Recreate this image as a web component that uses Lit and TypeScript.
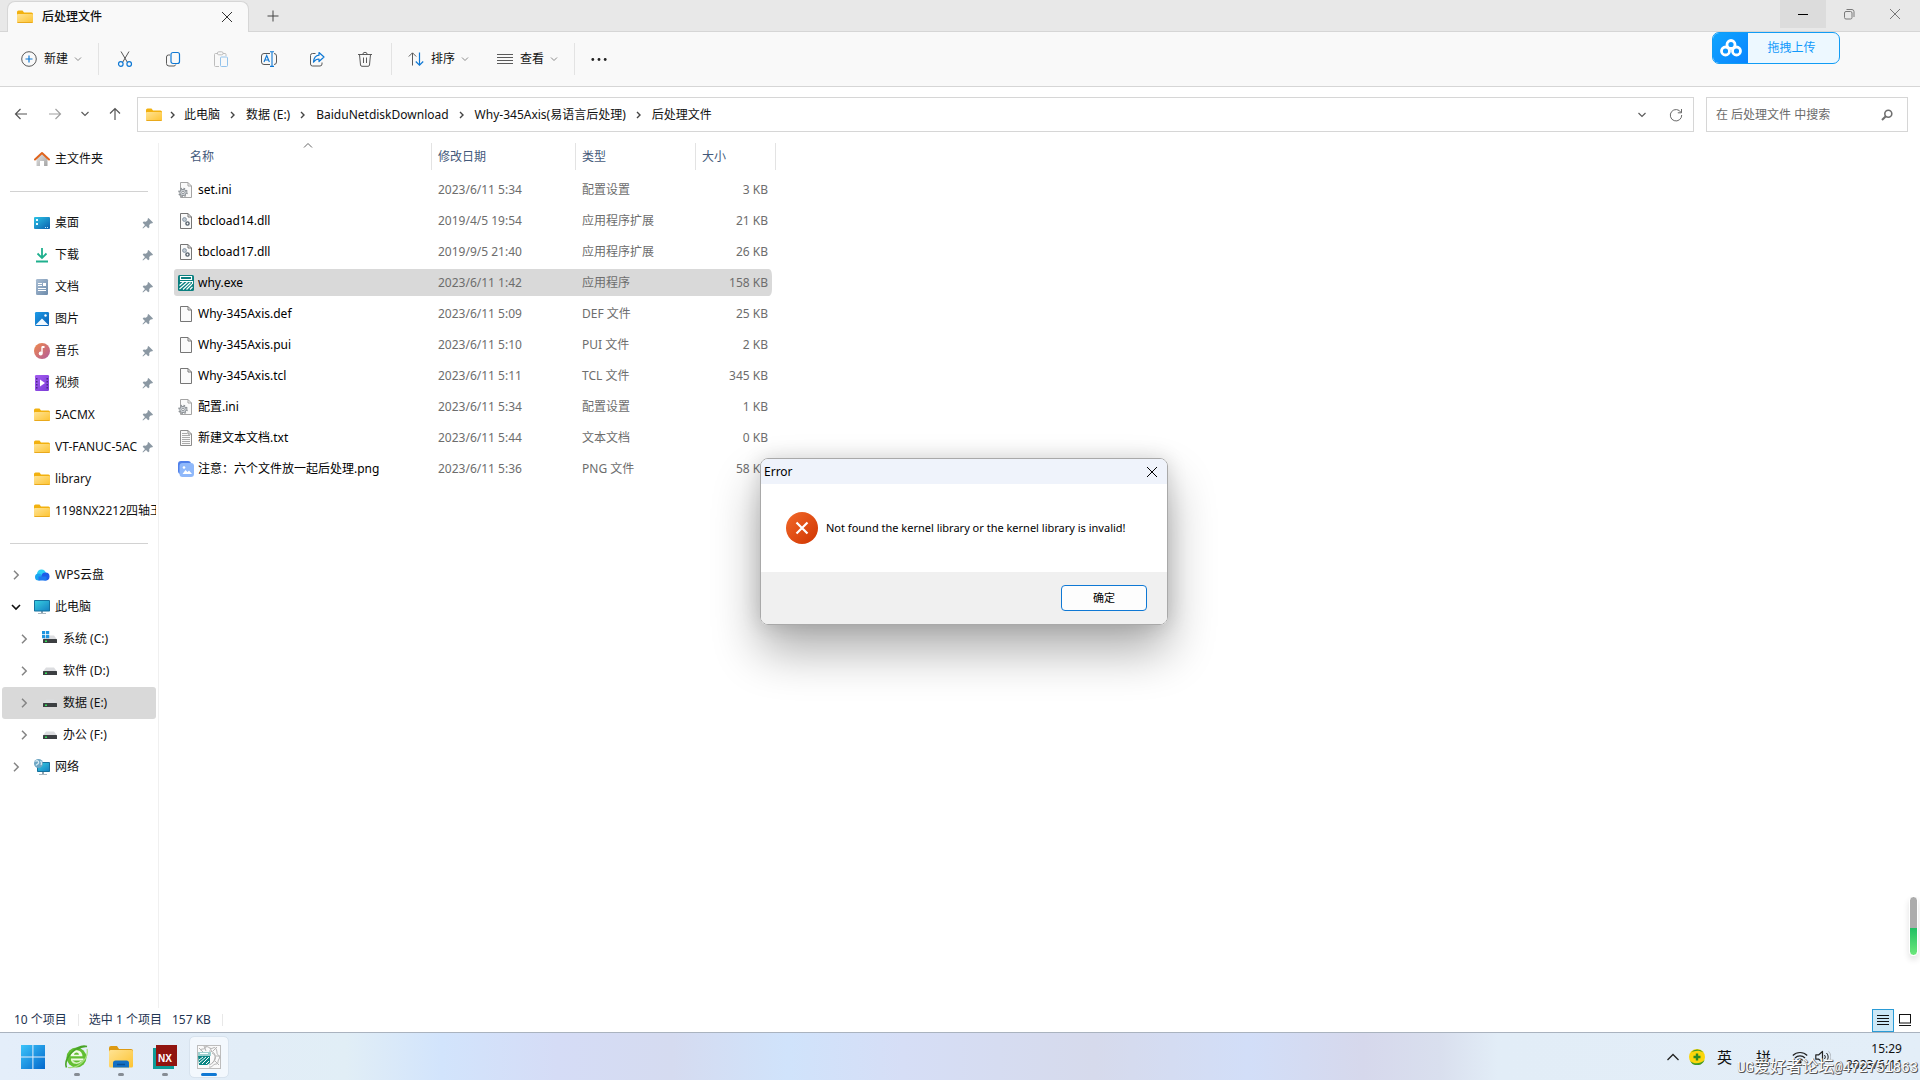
import { LitElement, html, css, svg, nothing, TemplateResult } from "lit";
import { customElement, state } from "lit/decorators.js";
import { classMap } from "lit/directives/class-map.js";

type Icon = { w: number; h: number; art: TemplateResult };

const icon = (w: number, h: number, art: TemplateResult): Icon => ({ w, h, art });

const sheet = (stroke: string) => svg`
  <path d="M2.500 .5h7.500l3.500 3.500v11.500h-11z" fill="#fafafa" stroke=${stroke}/>
  <path d="M10 .5v3.500h3.500" fill="none" stroke=${stroke}/>`;

const drive = svg`
  <path d="M4 4.500h8l3 4h-14z" fill="#dcdde0"/>
  <rect x="1" y="8" width="14" height="4" rx=".6" fill="#3c3f42"/>
  <rect x="3" y="9.500" width="2" height="1.500" fill="#35e05a"/>`;

const ICONS: Record<string, Icon> = {
  folder: icon(16, 16, svg`
    <path d="M0 3a1.500 1.500 0 0 1 1.500-1.500h4l1.500 2h7.500A1.500 1.500 0 0 1 16 5v3H0z" fill="#f2b10f"/>
    <rect x="0" y="5" width="16" height="9" rx="1" fill="url(#gFolder)"/>
    <path d="M.5 13.500h15" stroke="#e9a91c"/>`),
  home: icon(16, 16, svg`
    <path d="M2.500 7.500 8 2.500l5.500 5V15h-3.500v-5H6v5H2.500z" fill="url(#gHome)"/>
    <path d="M1 8.500 8 2l7 6.500" fill="none" stroke="#e0651e" stroke-width="2" stroke-linecap="round" stroke-linejoin="round"/>`),
  desktop: icon(16, 16, svg`
    <rect x="0" y="2" width="16" height="12" rx="1" fill="url(#gDesk)"/>
    <path d="M2 4h2v2H2zM2 8h2v2H2z" fill="#e9fbff"/>
    <path d="M11 12.500h1M13 12.500h1" stroke="#bfe9ff"/>`),
  download: icon(16, 16, svg`
    <path d="M8 1v9.500M3.500 6.500 8 11l4.500-4.500M2 14.500h12" fill="none" stroke="#1fb08e" stroke-width="1.800"/>`),
  document: icon(16, 16, svg`
    <rect x="2" y="0" width="12" height="16" rx="1.200" fill="url(#gDoc)"/>
    <path d="M4 4.500h4M4 6.500h4M4 9.500h8M4 11.500h8" stroke="#fff"/><rect x="9" y="4" width="3" height="3" fill="#fff"/>`),
  picture: icon(16, 16, svg`
    <rect x="1" y="1" width="14" height="14" rx="1.200" fill="url(#gPic)"/>
    <path d="M1.500 14 8 7.500l6.500 6.500z" fill="#f2f9ff"/><circle cx="11.500" cy="4.500" r="1.200" fill="#fff"/>`),
  music: icon(16, 16, svg`
    <circle cx="8" cy="8" r="8" fill="url(#gMusic)"/>
    <path d="M8 3.500v6.500" stroke="#fff" stroke-width="1.400"/><path d="M8 3h2.500v2H8z" fill="#fff"/><circle cx="6.700" cy="10.500" r="2" fill="#fff"/>`),
  video: icon(16, 16, svg`
    <rect x="1" y="0" width="14" height="16" rx="1.200" fill="url(#gVideo)"/>
    <path d="M6 4.500v7l5-3.500z" fill="#fff"/>
    <path d="M2 3h1.500v1.500H2zM2 6h1.500v1.500H2zM2 9h1.500v1.500H2zM2 12h1.500v1.500H2zM12.500 3H14v1.500h-1.500zM12.500 6H14v1.500h-1.500zM12.500 9H14v1.500h-1.500zM12.500 12H14v1.500h-1.500z" fill="#4b2a86"/>`),
  cloud: icon(16, 16, svg`
    <circle cx="7.500" cy="7" r="4.500" fill="#2fd0f5"/><circle cx="4.500" cy="10" r="3.500" fill="#1aa5f0"/>
    <circle cx="11.500" cy="9.500" r="4" fill="#1d5ce8"/><path d="M4.500 9.500h8v4h-8z" fill="#1d78ef"/>`),
  pc: icon(16, 16, svg`
    <path d="M7 12h2v2H7z" fill="#8fa3b0"/><path d="M4 14.500h8" stroke="#a9b7c0"/>
    <rect x="0" y="1" width="16" height="11.500" rx=".8" fill="#16719d"/><rect x="1" y="2" width="14" height="9.500" fill="url(#gPc)"/>`),
  drive: icon(16, 16, drive),
  system: icon(16, 16, svg`${drive}<path d="M0 0h3.200v3.200H0zM4 0h3.200v3.200H4zM0 4h3.200v3.200H0zM4 4h3.200v3.200H4z" fill="#1f95e0"/>`),
  network: icon(16, 16, svg`
    <path d="M8 13h2v2H8z" fill="#8fa3b0"/><path d="M5 15.500h8" stroke="#a9b7c0"/>
    <rect x="3" y="3" width="13" height="10" rx=".8" fill="#16719d"/><rect x="4" y="4" width="11" height="8" fill="url(#gPc)"/>
    <circle cx="4.500" cy="4.500" r="4.500" fill="#6ea6c4"/><path d="M1.500 2.500c2-2 3.500 0 3 1.500s-2 1-2.500 2.500M6.500 2c1 1 1.500 2 .5 4" fill="none" stroke="#d7ebf3" stroke-width="1.200"/>`),
  ini: icon(16, 16, svg`${sheet("#a4a4a4")}
    <circle cx="5" cy="10.500" r="4" fill="none" stroke="#8d9297" stroke-width="1.600" stroke-dasharray="1.600 1.540"/>
    <circle cx="5" cy="10.500" r="3.200" fill="#d6dade" stroke="#8d9297"/><circle cx="5" cy="10.500" r="1.300" fill="#fafafa" stroke="#8d9297"/>`),
  dll: icon(16, 16, svg`${sheet("#767676")}
    <circle cx="6.500" cy="6.500" r="1.900" fill="#c4cdd6" stroke="#8796a5"/><circle cx="9.500" cy="10.500" r="1.600" fill="#fff" stroke="#54606b" stroke-width="1.400"/>`),
  file: icon(16, 16, sheet("#767676")),
  txt: icon(16, 16, svg`${sheet("#8c8c8c")}<path d="M4 5.500h8M4 7.500h8M4 9.500h8M4 11.500h8M4 13.500h8M4 3.500h5" stroke="#ababab"/>`),
  exe: icon(16, 16, svg`
    <rect width="16" height="16" rx="1.500" fill="#0a7f7f"/>
    <path d="M2.500 1.500h11v3h-11zM2 6.500h12.500v2.500M1.500 10.500l4.500-4M1.500 14l8-7M5 14.500l7.500-7M8.500 14.500l5.500-5.500M12 14.500l2.500-2.500" fill="none" stroke="#fff" stroke-width="1.100"/>`),
  png: icon(16, 16, svg`
    <rect x="0" y="0" width="13" height="13" rx="3" fill="#4f80ea"/><rect x="1.500" y="2" width="14.500" height="14" rx="3" fill="#8fb8fa"/>
    <path d="M4.500 13l3-4 2 2 1.500-1.500L14 13z" fill="#fff"/><circle cx="6" cy="6.500" r="1.300" fill="#fff"/>`),
  pin: icon(12, 12, svg`
    <path d="M6.500 1 11 5.500l-1 1-1-.3-1.800 1.900.2 2.200-1.200 1L4 9 1 11.500.5 11 3 8 .7 5.800l1-1.200 2.200.2L5.800 3l-.3-1z" fill="#8b98a3"/>`),
  right: icon(10, 10, svg`<path d="M3 .8 7.200 5 3 9.200" fill="none" stroke="#858585" stroke-width="1.500"/>`),
  open: icon(10, 10, svg`<path d="M1 3l4 4 4-4" fill="none" stroke="#111" stroke-width="1.600"/>`),
  crumb: icon(6, 8, svg`<path d="M1 1l3 3-3 3" fill="none" stroke="#444" stroke-width="1.400"/>`),
  down: icon(8, 8, svg`<path d="M1 2.500l3 3 3-3" fill="none" stroke="#8a8a8a"/>`),
  downWide: icon(10, 10, svg`<path d="M1.500 3 5 6.500 8.500 3" fill="none" stroke="#5c5c5c" stroke-width="1.200"/>`),
  up: icon(10, 6, svg`<path d="M1 4.500l4-4 4 4" fill="none" stroke="#666"/>`),
  create: icon(16, 16, svg`
    <circle cx="8" cy="8" r="7.300" fill="none" stroke="#5a5a5a"/><path d="M8 4.500v7M4.500 8h7" stroke="#0f78d4" stroke-width="1.200"/>`),
  cut: icon(16, 16, svg`
    <path d="M4 .5l6.500 11M12 .5 5.500 11.500" fill="none" stroke="#555"/>
    <circle cx="3.800" cy="13" r="2.300" fill="none" stroke="#0f78d4" stroke-width="1.200"/><circle cx="12.200" cy="13" r="2.300" fill="none" stroke="#0f78d4" stroke-width="1.200"/>`),
  copy: icon(16, 16, svg`
    <rect x="6" y="1.500" width="8.500" height="11" rx="2" fill="none" stroke="#0f78d4" stroke-width="1.200"/>
    <path d="M5 4H3.500a2 2 0 0 0-2 2v6.500a2.500 2.500 0 0 0 2.500 2.500h5a2 2 0 0 0 1.800-1.500" fill="none" stroke="#5a5a5a"/>`),
  paste: icon(16, 16, svg`
    <path d="M6 15.500H2.500a1 1 0 0 1-1-1v-11a1 1 0 0 1 1-1H5M10 2.500h2a1 1 0 0 1 1 1V5" fill="none" stroke="#bdbdbd"/>
    <rect x="4.500" y=".8" width="5.500" height="3" rx="1.200" fill="none" stroke="#bdbdbd"/><rect x="7.500" y="6" width="7" height="9.500" rx="1" fill="#f9f9f9" stroke="#93c3ec"/>`),
  rename: icon(16, 16, svg`
    <path d="M9 2.500H3A2.500 2.500 0 0 0 .5 5v6A2.500 2.500 0 0 0 3 13.500h6M13 2.500A2.500 2.500 0 0 1 15.500 5v6a2.500 2.500 0 0 1-2.500 2.500" fill="none" stroke="#5a5a5a"/>
    <path d="M11 .8v14.500M9 .7h4M9 15.400h4M3 11l2.700-6.500L8.400 11M4 9h3.500" fill="none" stroke="#0f78d4" stroke-width="1.100"/>`),
  share: icon(16, 16, svg`
    <path d="M6.500 2.500H3.500a2 2 0 0 0-2 2v8.500a2 2 0 0 0 2 2H11a2 2 0 0 0 2-2v-1.500" fill="none" stroke="#5a5a5a"/>
    <path d="M10 1.500 15 6l-5 4.500V8C7.500 8 6 9 4.500 11.200 4.800 7 7 4.500 10 4.200z" fill="none" stroke="#0f78d4" stroke-width="1.200" stroke-linejoin="round"/>`),
  trash: icon(16, 16, svg`
    <path d="M1 3.500h14M5.800 3.500a2.200 2.200 0 0 1 4.400 0M2.500 3.500l1 10.500a1.500 1.500 0 0 0 1.500 1.300h6a1.500 1.500 0 0 0 1.500-1.300l1-10.500M6.500 6.500v5.500M9.500 6.500v5.500" fill="none" stroke="#5a5a5a"/>`),
  sort: icon(16, 16, svg`
    <path d="M4.500 14.500V2M.8 5.500 4.500 1.800l3.700 3.700" fill="none" stroke="#5a5a5a"/>
    <path d="M11.500 1.500V14M7.800 10.500l3.700 3.700 3.700-3.700" fill="none" stroke="#0f78d4" stroke-width="1.200"/>`),
  view: icon(16, 16, svg`<path d="M0 3.500h16M0 6.500h16M0 9.500h16M0 12.500h16" stroke="#5a5a5a"/>`),
  more: icon(16, 16, svg`<circle cx="1.800" cy="8.500" r="1.400" fill="#222"/><circle cx="8" cy="8.500" r="1.400" fill="#222"/><circle cx="14.200" cy="8.500" r="1.400" fill="#222"/>`),
  back: icon(14, 14, svg`<path d="M13 7H1.500M6.500 2l-5 5 5 5" fill="none" stroke="#555" stroke-width="1.200"/>`),
  forward: icon(14, 14, svg`<path d="M1 7h11.500M7.500 2l5 5-5 5" fill="none" stroke="#a0a0a0" stroke-width="1.200"/>`),
  upward: icon(14, 14, svg`<path d="M7 13V1.500M2 6.500l5-5 5 5" fill="none" stroke="#555" stroke-width="1.200"/>`),
  refresh: icon(14, 14, svg`<path d="M12 4.500A5.700 5.700 0 1 0 12.700 7M12.500 1v3.800H8.800" fill="none" stroke="#6a6a6a"/>`),
  search: icon(12, 12, svg`<circle cx="7.300" cy="4.700" r="3.500" fill="none" stroke="#6e6e6e" stroke-width="1.600"/><path d="M4.800 7.200 1 11" stroke="#6e6e6e" stroke-width="2"/>`),
  close: icon(12, 12, svg`<path d="M1 1l10 10M11 1 1 11" stroke="currentColor"/>`),
  plus: icon(12, 12, svg`<path d="M6 .5v11M.5 6h11" stroke="#444"/>`),
  minimise: icon(12, 12, svg`<path d="M1 6.500h10" stroke="#000"/>`),
  restore: icon(12, 12, svg`<rect x="1.500" y="3.500" width="7.500" height="7.500" rx="1.500" fill="none" stroke="#7a7a7a"/><path d="M3.500 1.500H9A2.200 2.200 0 0 1 11 3.700V9" fill="none" stroke="#7a7a7a"/>`),
  netdisk: icon(22, 18, svg`
    <g fill="none" stroke="#fff" stroke-width="2.800"><circle cx="11" cy="5.500" r="4"/><circle cx="5.500" cy="12" r="4"/><circle cx="16.500" cy="12" r="4"/></g>`),
  error: icon(32, 32, svg`<circle cx="16" cy="16" r="16" fill="url(#gError)"/><path d="M10.500 10.500l11 11M21.500 10.500l-11 11" stroke="#fff" stroke-width="2.200"/>`),
  details: icon(12, 12, svg`<path d="M0 1.500h12M0 4.500h12M0 7.500h12M0 10.500h12" stroke="#111"/>`),
  tiles: icon(12, 12, svg`<rect x=".5" y=".5" width="11" height="8.500" fill="#fff" stroke="#111"/><path d="M0 11.500h12" stroke="#111"/>`),
  start: icon(24, 24, svg`<path d="M0 0h11.400v11.400H0zM12.400 0H24v11.400H12.400zM0 12.400h11.400V24H0zM12.400 12.400H24V24H12.400z" fill="url(#gStart)"/>`),
  browser: icon(24, 24, svg`
    <circle cx="11.500" cy="12.500" r="10" fill="#62bf32"/>
    <path d="M5.500 11.300c.5-8 11.500-8 12 0z" fill="#f0fae6"/><path d="M9 9.800c.5-3 4.500-3 5 0z" fill="#62bf32"/>
    <path d="M6 14.500h12.500" stroke="#f0fae6" stroke-width="2"/>
    <path d="M6.500 14.500c1 4 6 5 10 1.500" fill="none" stroke="#d9f3c4" stroke-width="1.500"/>
    <path d="M1.500 22.500C-2 13 12-1 22 1.500c-4-.5-8 1.500-10 3" fill="none" stroke="#49a428" stroke-width="1.600"/>
    <path d="M22 4c2 9-8 20-19 18.500" fill="none" stroke="#a7e07c" stroke-width="1.200"/>`),
  explorer: icon(24, 24, svg`
    <path d="M0 3a2 2 0 0 1 2-2h6l2 3h12a2 2 0 0 1 2 2v3H0z" fill="#dd9a13"/><rect x="0" y="5" width="24" height="17.500" rx="1.500" fill="url(#gFolder)"/>
    <path d="M4 22.500V18a2.500 2.500 0 0 1 2.500-2.500h11A2.500 2.500 0 0 1 20 18v4.500z" fill="#1470c4"/><path d="M8 19.500h8" stroke="#0b4f94" stroke-width="1.500"/>`),
  nx: icon(24, 24, svg`
    <rect x="0" y="3" width="21" height="21" fill="#0d9c98"/><rect x="3" y="0" width="21" height="21" fill="#90140f"/>
    <text x="5" y="17" font-family="Liberation Sans, Arial, sans-serif" font-size="10" font-weight="700" fill="#fff">NX</text>`),
  axis: icon(24, 24, svg`
    <rect x=".5" y=".5" width="23" height="23" fill="#fafafa" stroke="#bdbdbd"/>
    <path d="M8 2c3-2 5 3 8 1s4 3 4 5 4 3 2 6 0 5-3 5-4 4-7 3M12 6c4 0 7 3 6 7s-3 6-6 7M2 3l4 4M7 1l2 5M20 2l-4 4M22 20l-4-4M3 5c3-2 5 0 6-3M15 8c5 2 4 8 0 10M13 3l2 4M19 11h4" fill="none" stroke="#b4b4b4"/>
    <path d="M1 7h13v4H1z" fill="#9fd0cf"/><path d="M1 11h12v7l-3 2H2z" fill="#0a8583"/>
    <path d="M3 8.500h8M2 15l4-3M2 18l7-6M5 19l7-7M9 19l3-3" fill="none" stroke="#fff"/>`),
  trayUp: icon(14, 14, svg`<path d="M1.500 10 7 4.500l5.500 5.500" fill="none" stroke="#222" stroke-width="1.300"/>`),
  guard: icon(16, 16, svg`
    <circle cx="8" cy="8" r="8" fill="#fbd60b"/><path d="M2 3.500A8 8 0 0 1 14.500 3.500C10 .8 6 1.500 2 3.500zM1 12c4 3 10 3.500 14.500-1A8 8 0 0 1 1 12z" fill="#3f9a2a"/>
    <path d="M8 4.500v7M4.500 8h7" stroke="#2b8a23" stroke-width="2.400"/>`),
  wifi: icon(16, 14, svg`
    <path d="M.8 5.500a10.200 10.200 0 0 1 14.400 0M3 8a7 7 0 0 1 10 0M5.300 10.300a3.800 3.800 0 0 1 5.400 0" fill="none" stroke="#222" stroke-width="1.200"/><circle cx="8" cy="12" r="1.600" fill="#111"/>`),
  volume: icon(16, 14, svg`
    <path d="M.8 4.800h3L7.500 1.500v11L3.800 9.200h-3z" fill="none" stroke="#222" stroke-width="1.200" stroke-linejoin="round"/>
    <path d="M9.500 5a3 3 0 0 1 0 4M11.500 3a5.600 5.600 0 0 1 0 8" fill="none" stroke="#222"/><path d="M13.500 1.200a8.200 8.200 0 0 1 0 11.600" fill="none" stroke="#b5bcc4"/>`),
};

const draw = (name: string) => {
  const { w, h, art } = ICONS[name];
  return html`<svg class="icon" width=${w} height=${h} viewBox="0 0 ${w} ${h}" aria-hidden="true">${art}</svg>`;
};

const FAVOURITES: [string, string, boolean][] = [
  ["desktop", "桌面", true],
  ["download", "下载", true],
  ["document", "文档", true],
  ["picture", "图片", true],
  ["music", "音乐", true],
  ["video", "视频", true],
  ["folder", "5ACMX", true],
  ["folder", "VT-FANUC-5AC", true],
  ["folder", "library", false],
  ["folder", "1198NX2212四轴王", false],
];

const TREE: { art: string; label: string; level: number; open?: boolean; current?: boolean }[] = [
  { art: "cloud", label: "WPS云盘", level: 1 },
  { art: "pc", label: "此电脑", level: 1, open: true },
  { art: "system", label: "系统 (C:)", level: 2 },
  { art: "drive", label: "软件 (D:)", level: 2 },
  { art: "drive", label: "数据 (E:)", level: 2, current: true },
  { art: "drive", label: "办公 (F:)", level: 2 },
  { art: "network", label: "网络", level: 1 },
];

const FILES: [string, string, string, string, string][] = [
  ["ini", "set.ini", "2023/6/11 5:34", "配置设置", "3 KB"],
  ["dll", "tbcload14.dll", "2019/4/5 19:54", "应用程序扩展", "21 KB"],
  ["dll", "tbcload17.dll", "2019/9/5 21:40", "应用程序扩展", "26 KB"],
  ["exe", "why.exe", "2023/6/11 1:42", "应用程序", "158 KB"],
  ["file", "Why-345Axis.def", "2023/6/11 5:09", "DEF 文件", "25 KB"],
  ["file", "Why-345Axis.pui", "2023/6/11 5:10", "PUI 文件", "2 KB"],
  ["file", "Why-345Axis.tcl", "2023/6/11 5:11", "TCL 文件", "345 KB"],
  ["ini", "配置.ini", "2023/6/11 5:34", "配置设置", "1 KB"],
  ["txt", "新建文本文档.txt", "2023/6/11 5:44", "文本文档", "0 KB"],
  ["png", "注意：六个文件放一起后处理.png", "2023/6/11 5:36", "PNG 文件", "58 KB"],
];

const CRUMBS = ["此电脑", "数据 (E:)", "BaiduNetdiskDownload", "Why-345Axis(易语言后处理)", "后处理文件"];

const TOOLS: [string, string][] = [
  ["cut", "剪切"],
  ["copy", "复制"],
  ["paste", "粘贴"],
  ["rename", "重命名"],
  ["share", "共享"],
  ["trash", "删除"],
];

const APPS: [string, string, string][] = [
  ["start", "开始", ""],
  ["browser", "浏览器", "running"],
  ["explorer", "文件资源管理器", "running"],
  ["nx", "NX", "running"],
  ["axis", "why.exe", "active"],
];

@customElement("app-root")
export class AppRoot extends LitElement {
  @state() private selected = "why.exe";
  @state() private dialogOpen = true;

  static styles = css`
    :host {
      display: flex;
      flex-direction: column;
      position: relative;
      min-height: 100vh;
      overflow: hidden;
      background: #fff;
      color: #111;
      font: 12px/16px "Noto Sans", "Noto Sans CJK SC", sans-serif;
      cursor: default;
    }
    * { box-sizing: border-box; }
    button, input { font: inherit; color: inherit; border: 0; padding: 0; margin: 0; background: none; }
    a { color: inherit; text-decoration: none; }
    .icon { display: block; flex: none; }
    .defs { position: absolute; width: 0; height: 0; }
    .center { display: flex; align-items: center; justify-content: center; }

    .titlebar { display: flex; height: 32px; background: #e8e8e8; border-bottom: 1px solid #d6d6d6; }
    .tab {
      display: flex; align-items: center; width: 242px; margin: 1px 0 -1px 7px; padding: 0 9px;
      background: #f9f9f9; border: 1px solid #d6d6d6; border-bottom: 0; border-radius: 8px 8px 0 0;
    }
    .tab-name { flex: 1; margin-left: 9px; font-weight: 500; }
    .tab-close { width: 24px; height: 24px; color: #333; }
    .tab-add { width: 48px; height: 31px; }
    .window-buttons { display: flex; height: 28px; margin: 0 2px 0 auto; color: #777; }
    .window-buttons button { width: 46px; }
    .window-buttons .hover { background: #dcdcdc; }

    .toolbar { display: flex; align-items: center; height: 55px; padding-left: 7px; background: #f9f9f9; border-bottom: 1px solid #d6d6d6; }
    .tool { width: 48px; height: 32px; }
    .tool.more { width: 44px; }
    .menu { display: flex; align-items: center; height: 32px; padding: 0 14px; }
    .menu-name { margin: 0 6px 0 7px; }
    .rule { width: 1px; height: 32px; margin: 0 2px; background: #e3e3e3; }

    .navbar { display: flex; height: 56px; padding: 10px 12px 11px 4px; }
    .nav-button { width: 34px; height: 34px; }
    .nav-button.small { width: 26px; }
    .nav-gap { width: 4px; }
    .address { flex: 1; display: flex; align-items: center; margin-left: 1px; border: 1px solid #d6d6d6; padding-left: 8px; }
    .crumbs { display: flex; align-items: center; flex: 1; }
    .crumb-arrow { width: 26px; }
    .crumb-arrow:first-child { width: 22px; }
    .search { display: flex; align-items: center; width: 202px; margin-left: 12px; padding: 0 14px 0 9px; border: 1px solid #d6d6d6; }
    .search input { flex: 1; min-width: 0; outline: 0; }
    .search input::placeholder { color: #6b6b6b; opacity: 1; }

    .body { display: flex; flex: 1; }
    .sidebar { width: 159px; padding: 0 2px; border-right: 1px solid #f0f0f0; }
    .side-row { display: flex; align-items: center; height: 32px; padding: 0 2px 0 32px; border-radius: 3px; overflow: hidden; }
    .side-row.bare { padding-right: 0; }
    .side-row.tree { padding-left: 4px; }
    .side-row.deep { padding-left: 12px; }
    .side-row.current { background: #d9d9d9; }
    .twisty { width: 20px; height: 20px; margin-right: 8px; }
    .side-name { flex: 1; margin-left: 5px; white-space: nowrap; overflow: hidden; }
    .pin { margin-left: 2px; }
    .side-rule { height: 1px; margin: 16px 8px 15px; background: #d2d2d2; }

    .listing { flex: 1; padding-left: 15px; }
    .files { table-layout: fixed; border-collapse: separate; border-spacing: 0 4px; width: 602px; margin-top: -4px; }
    .files th {
      position: relative; height: 29px; padding: 0 6px 2px; text-align: left; font-weight: 400; color: #44597a;
      background: linear-gradient(#e3e3e3, #e3e3e3) right top / 1px 27px no-repeat;
    }
    .files th:first-child { padding-left: 16px; }
    .sort-mark { position: absolute; top: 0; left: 50%; }
    .files td { height: 27px; padding: 0 6px; color: #6d6d6d; white-space: nowrap; }
    .files td:first-child { padding-left: 4px; border-radius: 3px 0 0 3px; }
    .files td:last-child { padding-right: 4px; text-align: right; border-right: 4px solid transparent; background-clip: padding-box; border-radius: 0 7px 7px 0; }
    .file { display: flex; align-items: center; gap: 4px; color: #000; }
    .selected td { background-color: #d9d9d9; }
    .col-name { width: 258px; }
    .col-date { width: 144px; }
    .col-type { width: 120px; }

    .status { display: flex; align-items: center; height: 24px; padding: 0 4px 0 14px; color: #1f3552; }
    .status-rule { width: 1px; height: 12px; margin: 0 10px 0 11px; background: #e8e8e8; }
    .status-size { margin-left: 10px; }
    .view-button { width: 22px; height: 23px; }
    .view-button.on { background: #cde8f6; border: 1px solid #2a9bd6; }
    .view-buttons { display: flex; margin-left: auto; }

    .taskbar {
      display: flex; align-items: center; height: 48px; padding: 0 18px 0 11px; border-top: 1px solid #aab3bf;
      background: linear-gradient(90deg, #e4eefa 0, #e2edf7 13%, #e1eef6 18%, #d2e4fc 23%, #d5dcf6 29%, #d5dbf0 35%, #d0e3fb 41%, #d6def6 47%, #d6daec 57%, #d2def8 65%, #d6d8ec 71%, #d9dfee 75%, #e2edf7 78%, #e3eef8 100%);
    }
    .app { display: flex; flex-direction: column; align-items: center; justify-content: flex-end; width: 38px; height: 40px; margin: 0 3px; padding-bottom: 1px; border-radius: 4px; gap: 3px; }
    .app.active { background: #f3f8fd; outline: 1px solid #d8e3ee; }
    .app::after { content: ""; width: 6px; height: 3px; margin-top: 1px; border-radius: 2px; }
    .app.running::after { background: #868c94; }
    .app.active::after { width: 16px; background: #0f78d4; }
    .tray { display: flex; align-items: center; margin-left: auto; }
    .tray-up { margin-right: 9px; }
    .ime { margin-left: 12px; font-size: 15px; line-height: 20px; }
    .ime + .ime { margin-left: 24px; }
    .tray-icons { display: flex; gap: 7px; margin: 0 15px 0 21px; }
    .clock { width: 56px; text-align: right; white-space: nowrap; }

    .upload { position: absolute; top: 32px; right: 80px; display: flex; width: 128px; height: 32px; border: 1px solid #119cf5; border-radius: 7px; background: #edf8ff; color: #1099fb; overflow: hidden; }
    .upload-logo { width: 35px; height: 100%; background: linear-gradient(135deg, #0fa5ff, #0a84ff); }
    .upload-name { flex: 1; height: 100%; padding-right: 4px; }

    .meter { position: absolute; right: 2px; top: 896px; width: 9px; height: 60px; border: 1px solid #fff; border-radius: 5px; background: linear-gradient(#acacac 0 31px, #1fbf62 31px, #6de87c 100%); box-shadow: 0 4px 6px rgba(0, 0, 0, .12); }

    .dialog { position: absolute; left: 760px; top: 458px; width: 408px; border: 1px solid #a9a9a9; border-radius: 8px; background: #fff; color: #000; overflow: hidden; }
    .dialog-shadow { position: absolute; left: 760px; top: 458px; width: 408px; height: 167px; border-radius: 8px; box-shadow: 0 26px 48px rgba(0, 0, 0, .32), 0 0 20px rgba(0, 0, 0, .14); }
    .dialog-head { display: flex; align-items: center; height: 25px; padding: 0 5px 0 3px; background: #eff3fb; }
    .dialog-close { width: 20px; height: 20px; margin-left: auto; }
    .dialog-text { display: flex; align-items: center; gap: 8px; height: 88px; padding-left: 25px; margin: 0; font-size: 11px; }
    .dialog-foot { display: flex; justify-content: flex-end; padding: 13px 20px; background: #f0f0f0; }
    .dialog-ok { width: 86px; height: 26px; border: 1px solid #0f78d4; border-radius: 4px; background: #fdfdfd; font-size: 11px; }

    .watermark { position: absolute; right: 2px; bottom: 3px; font: 14px/18px "Liberation Mono", monospace; color: #fff; text-shadow: 1px 1px 0 #555, 1px 0 0 #888, 0 1px 0 #888; white-space: nowrap; pointer-events: none; }
    .watermark-cjk { font: 16px/18px "Noto Sans CJK SC", sans-serif; }
  `;

  private gradient(id: string, from: string, to: string) {
    return svg`<linearGradient id=${id} x1="0" y1="0" x2="1" y2="1"><stop offset="0" stop-color=${from}/><stop offset="1" stop-color=${to}/></linearGradient>`;
  }

  private titlebar() {
    return html`
      <header class="titlebar">
        <div class="tab">
          ${draw("folder")}<span class="tab-name">后处理文件</span>
          <button class="tab-close center" aria-label="关闭标签页">${draw("close")}</button>
        </div>
        <button class="tab-add center" aria-label="新标签页">${draw("plus")}</button>
        <div class="window-buttons">
          <button class="hover center" aria-label="最小化">${draw("minimise")}</button>
          <button class="center" aria-label="还原">${draw("restore")}</button>
          <button class="center" aria-label="关闭">${draw("close")}</button>
        </div>
      </header>`;
  }

  private menu(art: string, name: string) {
    return html`<button class="menu">${draw(art)}<span class="menu-name">${name}</span>${draw("down")}</button>`;
  }

  private toolbar() {
    return html`
      <div class="toolbar">
        ${this.menu("create", "新建")}
        <span class="rule"></span>
        ${TOOLS.map(([art, name]) => html`<button class="tool center" aria-label=${name} ?disabled=${art === "paste"}>${draw(art)}</button>`)}
        <span class="rule"></span>
        ${this.menu("sort", "排序")}${this.menu("view", "查看")}
        <span class="rule"></span>
        <button class="tool more center" aria-label="更多">${draw("more")}</button>
      </div>`;
  }

  private navbar() {
    return html`
      <div class="navbar">
        <button class="nav-button center" aria-label="后退">${draw("back")}</button>
        <button class="nav-button center" aria-label="前进">${draw("forward")}</button>
        <button class="nav-button small center" aria-label="最近的位置">${draw("downWide")}</button>
        <button class="nav-button center" aria-label="上移">${draw("upward")}</button>
        <span class="nav-gap"></span>
        <div class="address">
          ${draw("folder")}
          <nav class="crumbs">
            ${CRUMBS.map((name) => html`<span class="crumb-arrow center">${draw("crumb")}</span><a href="#">${name}</a>`)}
          </nav>
          <button class="nav-button center" aria-label="历史">${draw("downWide")}</button>
          <button class="nav-button center" aria-label="刷新">${draw("refresh")}</button>
        </div>
        <label class="search">
          <input type="text" aria-label="搜索" placeholder="在 后处理文件 中搜索" />
          ${draw("search")}
        </label>
      </div>`;
  }

  private sidebar() {
    return html`
      <nav class="sidebar">
        <a class="side-row" href="#">${draw("home")}<span class="side-name">主文件夹</span></a>
        <div class="side-rule"></div>
        ${FAVOURITES.map(([art, name, pinned]) => html`
          <a class=${classMap({ "side-row": true, bare: !pinned })} href="#">
            ${draw(art)}<span class="side-name">${name}</span>
            ${pinned ? html`<span class="pin">${draw("pin")}</span>` : nothing}
          </a>`)}
        <div class="side-rule"></div>
        ${TREE.map((node) => html`
          <a class=${classMap({ "side-row": true, tree: true, deep: node.level === 2, current: !!node.current })} href="#">
            <span class="twisty center">${draw(node.open ? "open" : "right")}</span>
            ${draw(node.art)}<span class="side-name">${node.label}</span>
          </a>`)}
      </nav>`;
  }

  private listing() {
    return html`
      <main class="listing">
        <table class="files">
          <colgroup><col class="col-name" /><col class="col-date" /><col class="col-type" /><col /></colgroup>
          <thead>
            <tr><th>名称<span class="sort-mark">${draw("up")}</span></th><th>修改日期</th><th>类型</th><th>大小</th></tr>
          </thead>
          <tbody>
            ${FILES.map(([art, name, date, type, size]) => html`
              <tr class=${classMap({ selected: name === this.selected })} @click=${() => (this.selected = name)}>
                <td><span class="file">${draw(art)}${name}</span></td><td>${date}</td><td>${type}</td><td>${size}</td>
              </tr>`)}
          </tbody>
        </table>
      </main>`;
  }

  private dialog() {
    const dismiss = () => (this.dialogOpen = false);
    return html`
      <div class="dialog-shadow"></div>
      <section class="dialog" role="alertdialog" aria-labelledby="dialog-title">
        <div class="dialog-head">
          <span id="dialog-title">Error</span>
          <button class="dialog-close center" aria-label="关闭" @click=${dismiss}>${draw("close")}</button>
        </div>
        <p class="dialog-text">${draw("error")}Not found the kernel library or the kernel library is invalid!</p>
        <div class="dialog-foot"><button class="dialog-ok" @click=${dismiss}>确定</button></div>
      </section>`;
  }

  render() {
    return html`
      <svg class="defs" aria-hidden="true"><defs>
        ${this.gradient("gFolder", "#ffe394", "#fdc331")}
        ${this.gradient("gHome", "#e6e6e6", "#a3a3a3")}
        ${this.gradient("gDesk", "#2cc3e6", "#0b5fae")}
        ${this.gradient("gDoc", "#a9bdd3", "#6d8bab")}
        ${this.gradient("gPic", "#1c9be8", "#0b60b4")}
        ${this.gradient("gMusic", "#f08a4b", "#b25a9c")}
        ${this.gradient("gVideo", "#a35cf0", "#7a3bd6")}
        ${this.gradient("gPc", "#36cde0", "#1683c4")}
        ${this.gradient("gError", "#f2692a", "#cf3400")}
        ${this.gradient("gStart", "#3cc4fa", "#0468cc")}
      </defs></svg>
      ${this.titlebar()} ${this.toolbar()} ${this.navbar()}
      <div class="body">${this.sidebar()} ${this.listing()}</div>
      <footer class="status">
        <span>10 个项目</span><span class="status-rule"></span>
        <span>选中 1 个项目</span><span class="status-size">157 KB</span><span class="status-rule"></span>
        <div class="view-buttons">
          <button class="view-button on center" aria-label="详细信息">${draw("details")}</button>
          <button class="view-button center" aria-label="大图标">${draw("tiles")}</button>
        </div>
      </footer>
      <div class="taskbar">
        ${APPS.map(([art, name, mode]) => html`<button class="app ${mode}" aria-label=${name}>${draw(art)}</button>`)}
        <div class="tray">
          <span class="tray-up">${draw("trayUp")}</span>
          ${draw("guard")}
          <span class="ime">英</span><span class="ime">拼</span>
          <span class="tray-icons">${draw("wifi")}${draw("volume")}</span>
          <div class="clock"><div>15:29</div><div>2023/6/11</div></div>
        </div>
      </div>
      <button class="upload"><span class="upload-logo center">${draw("netdisk")}</span><span class="upload-name center">拖拽上传</span></button>
      <div class="meter"></div>
      ${this.dialogOpen ? this.dialog() : nothing}
      <div class="watermark">UG<span class="watermark-cjk">爱好者论坛</span>@472751863</div>`;
  }
}
